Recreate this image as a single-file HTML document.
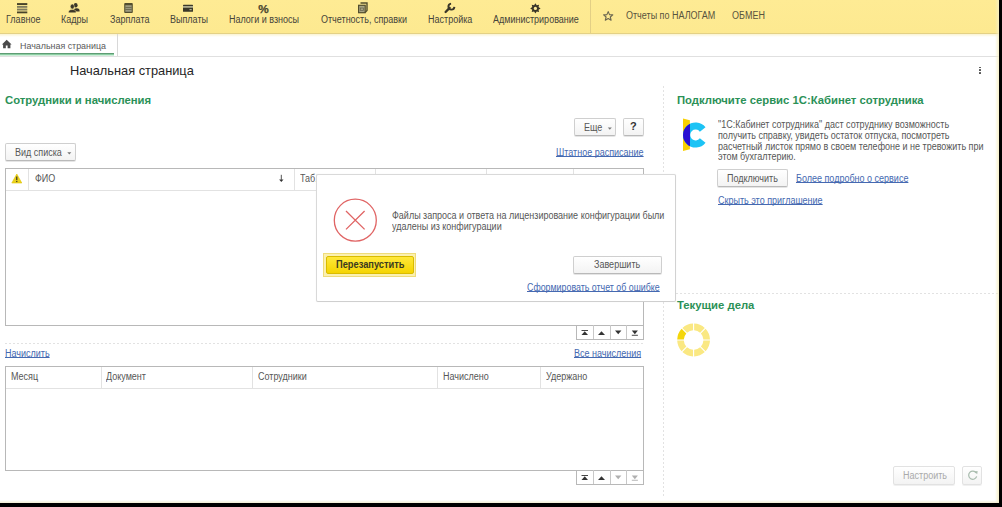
<!DOCTYPE html>
<html><head><meta charset="utf-8">
<style>
*{box-sizing:border-box;margin:0;padding:0}
html,body{width:1002px;height:507px;overflow:hidden;background:#000}
body{font-family:"Liberation Sans",sans-serif;color:#4d4d4d;position:relative}
#app{position:absolute;left:0;top:0;width:999px;height:503px;background:#fff;overflow:hidden}
.a{position:absolute;white-space:nowrap}
.t{position:absolute;white-space:nowrap;font-size:10px;line-height:11px;transform:scaleX(.9);transform-origin:0 0;color:#575757}
#tb{position:absolute;left:0;top:0;width:999px;height:34px;background:linear-gradient(#feeb94,#fde990);border-bottom:1px solid #e4d185}
.tb{color:#46443a}
.lnk{color:#4569b1;text-decoration:underline;text-underline-offset:0px;text-decoration-skip-ink:none}
.btn{position:absolute;border:1px solid #cfcfcf;border-bottom-color:#b9b9b9;border-radius:2px;background:linear-gradient(#fff,#f3f3f3);box-shadow:0 1px 0 rgba(0,0,0,.10)}
.grid{position:absolute;border:1px solid #b8b8b8}
.hdr{position:absolute;left:0;right:0;top:0;border-bottom:1px solid #e2e2e2}
.vs{position:absolute;top:0;width:1px;background:#e2e2e2}
.green{color:#2b9157;font-weight:bold;font-size:11.3px;line-height:13px}
.dotv{position:absolute;width:1px;background-image:linear-gradient(#e2e2e2 50%,transparent 50%);background-size:1px 4px}
.doth{position:absolute;height:1px;background-image:linear-gradient(90deg,#e2e2e2 50%,transparent 50%);background-size:4px 1px}
.nav{position:absolute;width:68px;height:14px;border:1px solid #b8b8b8;border-top:none;background:#fff}
.nav div{position:absolute;top:-1px;bottom:0;width:1px;background:#c8c8c8}
</style></head><body>
<div id="app">
 <!-- toolbar -->
 <div id="tb">
  <div class="t tb" style="left:6px;top:14px">Главное</div>
  <div class="t tb" style="left:61px;top:14px">Кадры</div>
  <div class="t tb" style="left:110px;top:14px">Зарплата</div>
  <div class="t tb" style="left:170px;top:14px">Выплаты</div>
  <div class="t tb" style="left:229px;top:14px">Налоги и взносы</div>
  <div class="t tb" style="left:321px;top:14px">Отчетность, справки</div>
  <div class="t tb" style="left:428px;top:14px">Настройка</div>
  <div class="t tb" style="left:493px;top:14px">Администрирование</div>
  <div class="a" style="left:590px;top:0;width:1px;height:33px;background:#e3cf85"></div>
  <div class="t tb" style="left:626px;top:10px;color:#58543e">Отчеты по НАЛОГАМ</div>
  <div class="t tb" style="left:732px;top:10px;color:#58543e">ОБМЕН</div>
 </div>
 <!-- tab bar -->
 <div class="a" style="left:0;top:34px;width:999px;height:3px;background:linear-gradient(rgba(248,238,190,.7),rgba(255,255,255,0))"></div>
 <div class="a" style="left:0;top:55.5px;width:999px;height:1.6px;background:#e0e0e0"></div>
 <div class="a" style="left:0;top:53px;width:114px;height:3px;background:linear-gradient(#5e9d74 33%,#8ccda3 33%,#8ccda3 66%,#cdeed8 66%)"></div>
 <div class="a" style="left:117px;top:34px;width:1px;height:22px;background:#d8d8d8"></div>
 <div class="t" style="left:19.5px;top:39.8px;color:#5a5a5a;font-size:9.5px;transform:scaleX(.935)">Начальная страница</div>

 <!-- title -->
 <div class="a" style="left:70px;top:63px;font-size:12.8px;line-height:16px;color:#262626">Начальная страница</div>

 <!-- left section -->
 <div class="a green" style="left:5px;top:94px">Сотрудники и начисления</div>

 <div class="btn" style="left:574px;top:118px;width:42px;height:18px"></div>
 <div class="t" style="left:584px;top:122px">Еще</div>
 <div class="btn" style="left:623px;top:118px;width:21px;height:18px"></div>
 <div class="a" style="left:630px;top:121px;color:#333;font-weight:bold;font-size:11px;line-height:11px">?</div>
 <div class="t lnk" style="left:556px;top:146.5px">Штатное расписание</div>

 <div class="btn" style="left:5px;top:143px;width:71px;height:18px"></div>
 <div class="t" style="left:15px;top:146.6px">Вид списка</div>

 <!-- grid 1 -->
 <div class="grid" style="left:5px;top:168px;width:639px;height:158px">
  <div class="hdr" style="height:22px"></div>
  <div class="vs" style="left:22px;height:21px"></div>
  <div class="vs" style="left:288px;height:21px"></div>
  <div class="vs" style="left:369px;height:21px"></div>
  <div class="vs" style="left:480px;height:21px"></div>
  <div class="vs" style="left:567px;height:21px"></div>
 </div>
 <div class="t" style="left:35px;top:173.2px">ФИО</div>
 <div class="t" style="left:299.5px;top:173.2px">Таб.</div>
 <div class="nav" style="left:576px;top:326px"><div style="left:16px"></div><div style="left:33px"></div><div style="left:49px"></div></div>

 <div class="doth" style="left:5px;top:343px;width:639px"></div>
 <div class="t lnk" style="left:5px;top:347.6px">Начислить</div>
 <div class="t lnk" style="left:574px;top:347.8px">Все начисления</div>

 <!-- grid 2 -->
 <div class="grid" style="left:5px;top:366px;width:639px;height:105px">
  <div class="hdr" style="height:22px"></div>
  <div class="vs" style="left:95px;height:21px"></div>
  <div class="vs" style="left:246px;height:21px"></div>
  <div class="vs" style="left:431px;height:21px"></div>
  <div class="vs" style="left:534px;height:21px"></div>
 </div>
 <div class="t" style="left:11px;top:371.2px">Месяц</div>
 <div class="t" style="left:106px;top:371.2px">Документ</div>
 <div class="t" style="left:258px;top:371.2px">Сотрудники</div>
 <div class="t" style="left:443px;top:371.2px">Начислено</div>
 <div class="t" style="left:546px;top:371.2px">Удержано</div>
 <div class="nav" style="left:576px;top:471px"><div style="left:16px"></div><div style="left:33px"></div><div style="left:49px"></div></div>

 <!-- right panel -->
 <div class="dotv" style="left:663px;top:86px;height:410px"></div>
 <div class="a green" style="left:677px;top:94px">Подключите сервис 1С:Кабинет сотрудника</div>
 <div class="t" style="left:718px;top:119px">"1С:Кабинет сотрудника" даст сотруднику возможность</div>
 <div class="t" style="left:718px;top:130px">получить справку, увидеть остаток отпуска, посмотреть</div>
 <div class="t" style="left:718px;top:141.4px">расчетный листок прямо в своем телефоне и не тревожить при</div>
 <div class="t" style="left:718px;top:151.3px">этом бухгалтерию.</div>
 <div class="btn" style="left:717px;top:169px;width:71px;height:18px"></div>
 <div class="t" style="left:727px;top:172.8px">Подключить</div>
 <div class="t lnk" style="left:796px;top:172.8px">Более подробно о сервисе</div>
 <div class="t lnk" style="left:718px;top:194.8px">Скрыть это приглашение</div>

 <div class="doth" style="left:664px;top:293px;width:335px"></div>
 <div class="a green" style="left:677px;top:299px">Текущие дела</div>

 <div class="btn" style="left:893px;top:466px;width:62px;height:19px;border-color:#e2e2e2;box-shadow:0 1px 0 rgba(0,0,0,.06)"></div>
 <div class="t" style="left:903px;top:470px;color:#aaa">Настроить</div>
 <div class="btn" style="left:962px;top:466px;width:20px;height:19px;border-color:#e2e2e2;box-shadow:0 1px 0 rgba(0,0,0,.06)"></div>

 <div class="a" style="left:979px;top:66.5px;width:1.7px;height:1.7px;border-radius:50%;background:#4a4a4a"></div>
 <div class="a" style="left:979px;top:69.3px;width:1.7px;height:1.7px;border-radius:50%;background:#4a4a4a"></div>
 <div class="a" style="left:979px;top:72.1px;width:1.7px;height:1.7px;border-radius:50%;background:#4a4a4a"></div>

 <svg class="a" style="left:0;top:0" width="999" height="503" viewBox="0 0 999 503">
  <!-- Главное -->
  <rect x="17" y="3.1" width="10.3" height="1.9" fill="#47432a"/>
  <rect x="17" y="5.9" width="10.3" height="1.9" fill="#807c5e"/>
  <rect x="17" y="8.6" width="10.3" height="1.9" fill="#807c5e"/>
  <rect x="17" y="11.5" width="10.3" height="1.8" fill="#47432a"/>
  <!-- Кадры -->
  <ellipse cx="75.7" cy="5.2" rx="1.9" ry="2.3" fill="#3a3628"/>
  <path d="M73.6 11.5 Q73.4 8.3 76.7 8.3 Q79.8 8.3 79.6 11.5Z" fill="#3a3628"/>
  <ellipse cx="72.3" cy="6.5" rx="2.0" ry="2.5" fill="#3a3628" stroke="#fdea96" stroke-width=".5"/>
  <path d="M68.5 12.8 Q68.3 9.5 72.3 9.5 Q76.3 9.5 76.1 12.8Z" fill="#3a3628" stroke="#fdea96" stroke-width=".5"/>
  <!-- Зарплата -->
  <rect x="124.2" y="3" width="8.6" height="9.9" rx="1" fill="#524e2e"/>
  <rect x="125.3" y="5.2" width="6.4" height="6.6" fill="#9c9a7e"/>
  <rect x="125.3" y="7.1" width="6.4" height=".8" fill="#65624a"/>
  <rect x="125.3" y="9.2" width="6.4" height=".8" fill="#65624a"/>
  <!-- Выплаты -->
  <rect x="183" y="4.7" width="10" height="7.1" rx=".6" fill="#3a3828"/>
  <rect x="183" y="6" width="10" height="1.8" fill="#aeac8e"/>
  <rect x="189.5" y="9" width="2.2" height="1.2" fill="#aeac8e"/>
  <!-- Налоги -->
  <text x="258.2" y="12.9" font-family="Liberation Sans" font-weight="bold" font-size="11.8" fill="#4a4630" stroke="#4a4630" stroke-width=".25">%</text>
  <!-- Отчетность -->
  <path d="M360.5 3 H367 V10.5 L365 12.5" fill="none" stroke="#524e2e" stroke-width="1.4"/>
  <rect x="358.6" y="5.3" width="6.6" height="7.4" fill="#a8a584" stroke="#524e2e" stroke-width="1.2"/>
  <rect x="360.3" y="8" width="3.2" height="2.6" fill="none" stroke="#65624a" stroke-width=".7"/>
  <!-- Настройка wrench -->
  <path d="M445.6 12 L449.6 7.9" stroke="#3a3628" stroke-width="2.3" stroke-linecap="round"/>
  <path d="M451.1 3.6 A3 3 0 1 0 454.4 6.86" fill="none" stroke="#3a3628" stroke-width="1.9"/>
  <!-- Администрирование gear -->
  <path d="M535.40 3.20 L536.70 5.26 L539.08 4.72 L538.54 7.10 L540.60 8.40 L538.54 9.70 L539.08 12.08 L536.70 11.54 L535.40 13.60 L534.10 11.54 L531.72 12.08 L532.26 9.70 L530.20 8.40 L532.26 7.10 L531.72 4.72 L534.10 5.26Z" fill="#3a3628"/>
  <circle cx="535.4" cy="8.4" r="1.6" fill="#fdea96"/>
  <!-- star -->
  <path d="M608.2 11.6 L609.5 14.6 L612.8 14.9 L610.3 17 L611.1 20.2 L608.2 18.5 L605.3 20.2 L606.1 17 L603.6 14.9 L606.9 14.6 Z" fill="none" stroke="#6a6650" stroke-width="1.1" stroke-linejoin="round"/>
  <!-- home -->
  <path d="M6.7 39.8 L11.6 44.6 H10.4 V48.3 H7.6 V45.6 H5.8 V48.3 H3.1 V44.6 H1.9 Z" fill="#4a4a4a"/>
  <!-- warning -->
  <path d="M16.8 174 L21.8 183 H11.8 Z" fill="#e9d21e" stroke="#e0c300" stroke-width=".6" stroke-linejoin="round"/>
  <rect x="16.1" y="176.5" width="1.3" height="3.6" fill="#4a4020"/>
  <rect x="16.1" y="180.9" width="1.3" height="1.2" fill="#4a4020"/>
  <!-- nav1 -->
  <g fill="#333">
   <rect x="581.5" y="330" width="6.5" height=".9"/>
   <path d="M581.5 335 L584.75 331.2 L588 335Z"/>
   <path d="M598 335 L601.5 331.2 L605 335Z"/>
   <path d="M615 330.6 L618.2 334.3 L621.4 330.6Z"/>
   <path d="M631.8 330.6 L634.85 334.3 L637.9 330.6Z"/>
   <rect x="631.8" y="334.8" width="6.1" height=".9"/>
  </g>
  <!-- nav2 -->
  <g fill="#333">
   <rect x="581.5" y="475" width="6.5" height=".9"/>
   <path d="M581.5 480 L584.75 476.2 L588 480Z"/>
   <path d="M598 480 L601.5 476.2 L605 480Z"/>
  </g>
  <g fill="#b0b0b0">
   <path d="M615 475.6 L618.2 479.3 L621.4 475.6Z"/>
   <path d="M631.8 475.6 L634.85 479.3 L637.9 475.6Z"/>
   <rect x="631.8" y="479.8" width="6.1" height=".9"/>
  </g>
  <!-- dropdown arrows -->
  <path d="M67.3 152.3 L69.3 154.5 L71.3 152.3Z" fill="#777"/>
  <path d="M607.8 127.5 L609.8 129.7 L611.8 127.5Z" fill="#777"/>
  <!-- sort arrow -->
  <rect x="280.8" y="174.8" width="1" height="5" fill="#555"/>
  <path d="M279.1 179.4 L283.5 179.4 L281.3 182Z" fill="#333"/>
  <!-- logo -->
  <defs><clipPath id="cb"><rect x="683" y="100" width="7" height="60"/></clipPath></defs>
  <path d="M683 118.6 L689.9 120.3 V149.3 L683 151Z" fill="#f9d000"/>
  <path d="M705.53 127.24A12.6 12.6 0 1 0 705.53 142.76L699.86 138.32A5.4 5.4 0 1 1 699.86 131.68Z" fill="#1cc3f5"/>
  <path clip-path="url(#cb)" d="M705.53 127.24A12.6 12.6 0 1 0 705.53 142.76L699.86 138.32A5.4 5.4 0 1 1 699.86 131.68Z" fill="#2a0fd2"/>
  <!-- spinner -->
  <path d="M709.99 339.45A16.4 16.4 0 0 0 705.58 328.80L700.91 333.47A9.8 9.8 0 0 1 703.38 339.45Z" fill="#fae882"/>
  <path d="M704.80 328.02A16.4 16.4 0 0 0 694.15 323.61L694.15 330.22A9.8 9.8 0 0 1 700.13 332.69Z" fill="#fae882"/>
  <path d="M693.05 323.61A16.4 16.4 0 0 0 682.40 328.02L687.07 332.69A9.8 9.8 0 0 1 693.05 330.22Z" fill="#fae882"/>
  <path d="M681.62 328.80A16.4 16.4 0 0 0 677.21 339.45L683.82 339.45A9.8 9.8 0 0 1 686.29 333.47Z" fill="#f4d60a"/>
  <path d="M677.21 340.55A16.4 16.4 0 0 0 681.62 351.20L686.29 346.53A9.8 9.8 0 0 1 683.82 340.55Z" fill="#fae882"/>
  <path d="M682.40 351.98A16.4 16.4 0 0 0 693.05 356.39L693.05 349.78A9.8 9.8 0 0 1 687.07 347.31Z" fill="#fae882"/>
  <path d="M694.15 356.39A16.4 16.4 0 0 0 704.80 351.98L700.13 347.31A9.8 9.8 0 0 1 694.15 349.78Z" fill="#fae882"/>
  <path d="M705.58 351.20A16.4 16.4 0 0 0 709.99 340.55L703.38 340.55A9.8 9.8 0 0 1 700.91 346.53Z" fill="#fae882"/>
  <!-- refresh -->
  <path d="M976.2 472.9 A4.1 4.1 0 1 0 976.7 476.4" fill="none" stroke="#a9bcae" stroke-width="1.25"/>
  <path d="M974.3 471.6 L977.6 470.9 L977.2 474.3Z" fill="#a9bcae"/>
 </svg>

 <div class="a" style="left:995px;top:0;width:4px;height:503px;background:linear-gradient(90deg,rgba(255,250,215,0),rgba(245,238,195,.9))"></div>
 <div class="a" style="left:0;top:500px;width:999px;height:3px;background:linear-gradient(rgba(255,250,225,0),rgba(240,235,205,.9))"></div>
 <!-- dialog -->
 <div class="a" style="left:316px;top:174px;width:360px;height:128px;background:#fff;border:1.5px solid #d9d9d9;border-bottom-color:#cfcfcf;border-right-color:#d2d2d2;border-radius:2px;box-shadow:0 0 1px rgba(0,0,0,.1)"></div>
 <svg class="a" style="left:316px;top:174px" width="360" height="128" viewBox="316 174 360 128">
  <circle cx="355.3" cy="220.2" r="21" fill="none" stroke="#e06464" stroke-width="1.3"/>
  <path d="M346 211 L364.6 229.4 M364.6 211 L346 229.4" stroke="#e06464" stroke-width="1.3"/>
 </svg>
 <div class="t" style="left:392px;top:209.6px">Файлы запроса и ответа на лицензирование конфигурации были</div>
 <div class="t" style="left:392px;top:221px">удалены из конфигурации</div>
 <div class="a" style="left:323px;top:253px;width:93px;height:24px;background:#fbf0b0;border:1px solid #efdc7a"></div>
 <div class="a" style="left:326px;top:256px;width:88px;height:18px;background:linear-gradient(#ffe83a,#f5d400);border:1px solid #d9bb00;border-radius:2px"></div>
 <div class="t" style="left:335.5px;top:259.3px;color:#3a3a20;font-weight:bold;transform:scaleX(.928)">Перезапустить</div>
 <div class="btn" style="left:573px;top:256px;width:89px;height:18px"></div>
 <div class="t" style="left:594px;top:259.3px">Завершить</div>
 <div class="t lnk" style="left:527px;top:281.5px;transform:scaleX(.885)">Сформировать отчет об ошибке</div>
</div>
</body></html>
